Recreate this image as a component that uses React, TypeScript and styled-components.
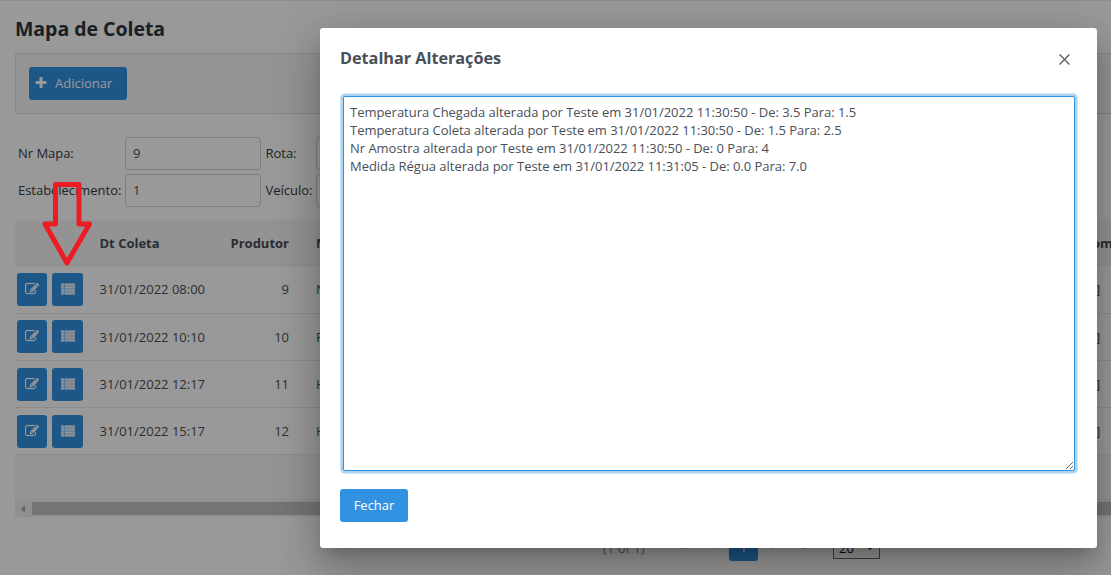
import React from 'react';
import styled, { createGlobalStyle } from 'styled-components';

const Global = createGlobalStyle`
  * { box-sizing: border-box; }
  html, body { margin: 0; padding: 0; background: #fff; overflow: hidden; }
  body { font: 13px/18px "Open Sans", "Noto Sans", sans-serif; color: #484f57; }
`;

const Screen = styled.div`
  position: relative;
  width: 1111px;
  height: 575px;
  overflow: hidden;
`;
const Page = styled.main`
  display: flex;
  flex-direction: column;
  padding: 14px 0 0 15px;
  height: 100%;
  border-top: 1px solid #ededed;
`;
const Title = styled.h1`
  margin: 0;
  height: 38px;
  font-size: 19.5px;
  line-height: 27px;
  font-weight: 700;
  letter-spacing: -0.03px;
  color: #2c343c;
`;
const Toolbar = styled.div`
  display: flex;
  align-items: center;
  flex: none;
  height: 61px;
  padding-left: 13px;
  border: 1px solid #dedede;
  border-right: 0;
  border-radius: 3px 0 0 3px;
  background: #f7f7f7;
`;
const Button = styled.button<{ $width: number }>`
  display: inline-flex;
  align-items: center;
  justify-content: center;
  flex: none;
  width: ${(p) => p.$width}px;
  height: 33px;
  padding: 0 0 2px;
  border: 0;
  border-radius: 3px;
  background: #3192e1;
  color: #fff;
  font: inherit;
`;
const AddButton = styled(Button)`
  justify-content: flex-start;
  padding-left: 5px;
  gap: 7px;
`;
const IconButton = styled(Button)`
  padding: 0 0 1px;
`;
const Filters = styled.div`
  display: grid;
  flex: none;
  grid-template-columns: 107px 136px 55px 136px;
  grid-template-rows: 33px 33px;
  row-gap: 4px;
  padding: 23px 0 0 3px;
  align-items: center;
  color: #333b44;
`;
const FilterLabel = styled.label<{ $indent?: boolean }>`
  padding: 0 0 2px ${(p) => (p.$indent ? 4.5 : 0)}px;
  white-space: nowrap;
  letter-spacing: -0.03px;
`;
const Field = styled.div`
  height: 33px;
  padding: 6px 7px;
  border: 1px solid #ced4da;
  border-radius: 3px;
  color: #484f57;
`;
const Table = styled.section`
  flex: none;
  margin-top: 13px;
`;
const Row = styled.div<{ $tall?: boolean }>`
  display: flex;
  align-items: center;
  height: ${(p) => (p.$tall ? 48 : 47)}px;
  padding-bottom: ${(p) => (p.$tall ? 1 : 0)}px;
  border-bottom: 1px solid #e9e9e9;
`;
const HeadRow = styled(Row)`
  height: 46px;
  background: #f5f5f5;
  font-weight: 700;
  color: #454c54;
`;
const Actions = styled.div<{ $raised?: boolean }>`
  display: flex;
  gap: 5px;
  width: 84px;
  padding-left: 2px;
  padding-bottom: ${(p) => (p.$raised ? 1 : 0)}px;
`;
const DateCell = styled.div`
  width: 115px;
  padding-left: 0.5px;
  white-space: nowrap;
`;
const ProducerCell = styled.div`
  width: 75px;
  text-align: right;
`;
const NameCell = styled.div`
  flex: 1;
  padding-left: 27px;
`;
const EndCell = styled.div<{ $width: number }>`
  width: ${(p) => p.$width}px;
`;
const TableFooter = styled.div`
  height: 45px;
  background: #f7f7f7;
  border-bottom: 1px solid #ededed;
`;
const ScrollTrack = styled.div`
  display: flex;
  align-items: center;
  height: 17px;
  background: #f1f1f1;
`;
const ScrollEnd = styled.div`
  display: flex;
  justify-content: center;
  width: 17px;
  padding-right: 1px;
`;
const ScrollThumb = styled.div`
  flex: 1;
  height: 13px;
  background: #c1c1c1;
`;
const Paginator = styled.footer`
  display: flex;
  align-items: center;
  flex: none;
  height: 27px;
  margin-top: 17px;
  padding-left: 588px;
  color: #777f87;
`;
const PageCount = styled.span`
  width: 63px;
`;
const Chevrons = styled.span`
  display: flex;
  justify-content: space-around;
  width: 63px;
  padding-bottom: 4px;
  font-size: 12px;
  color: #aeb4ba;
`;
const PageNumber = styled(Button)`
  height: 27px;
`;
const PageSize = styled.div`
  display: flex;
  align-items: center;
  justify-content: space-between;
  width: 47px;
  height: 22px;
  margin-left: 12px;
  padding: 0 5px;
  border: 1px solid #707070;
  color: #111;
`;
const Overlay = styled.div`
  position: absolute;
  inset: 0;
  background: rgba(0, 0, 0, 0.4);
`;
const Dialog = styled.div`
  position: absolute;
  left: 320px;
  top: 28px;
  display: flex;
  flex-direction: column;
  align-items: flex-start;
  width: 777px;
  height: 520px;
  padding: 18px 20px 26px;
  border-radius: 3px;
  background: #fff;
  box-shadow: 0 11px 15px -7px rgba(0, 0, 0, 0.2), 0 24px 38px 3px rgba(0, 0, 0, 0.14),
    0 9px 46px 8px rgba(0, 0, 0, 0.12);
`;
const DialogHeader = styled.header`
  display: flex;
  justify-content: space-between;
  width: 100%;
  height: 50px;
  padding-right: 7px;
`;
const DialogTitle = styled.h2`
  margin: 0;
  font-size: 16.25px;
  line-height: 24px;
  font-weight: 700;
  letter-spacing: -0.03px;
`;
const CloseIcon = styled.svg`
  margin-top: 8px;
`;
const Log = styled.textarea`
  width: 732px;
  height: 375px;
  margin: 0 0 0 3px;
  padding: 6px;
  flex: none;
  border: 1px solid #3192e1;
  border-radius: 2px;
  outline: none;
  box-shadow: 0 0 0 2.6px #acd3f3;
  color: #484f57;
  font: inherit;
  letter-spacing: -0.028px;
  resize: both;
`;
const DialogFooter = styled.footer`
  margin-top: 18px;
`;
const Pointer = styled.svg`
  position: absolute;
  left: 40px;
  top: 180px;
`;

const PlusIcon = () => (
  <svg width="14" height="14" viewBox="0 0 1792 1792" fill="currentColor">
    <path d="M1600 736v192q0 40-28 68t-68 28h-416v416q0 40-28 68t-68 28h-192q-40 0-68-28t-28-68v-416h-416q-40 0-68-28t-28-68v-192q0-40 28-68t68-28h416v-416q0-40 28-68t68-28h192q40 0 68 28t28 68v416h416q40 0 68 28t28 68z" />
  </svg>
);
const EditIcon = () => (
  <svg width="14" height="14" viewBox="0 0 1792 1792" fill="currentColor" stroke="currentColor" strokeWidth="30">
    <path d="M888 1184l116-116-152-152-116 116v56h96v96h56zm440-720q-16-16-33 1l-350 350q-17 17-1 33t33-1l350-350q17-17 1-33zm80 594v190q0 119-84.5 203.5t-203.5 84.5h-832q-119 0-203.5-84.5t-84.5-203.5v-832q0-119 84.5-203.5t203.5-84.5h832q63 0 117 25 15 7 18 23 3 17-9 29l-49 49q-14 14-32 8-23-6-45-6h-832q-66 0-113 47t-47 113v832q0 66 47 113t113 47h832q66 0 113-47t47-113v-126q0-13 9-22l64-64q15-15 35-7t20 29zm-96-738l288 288-672 672h-288v-288zm444 132l-92 92-288-288 92-92q28-28 68-28t68 28l152 152q28 28 28 68t-28 68z" />
  </svg>
);
const ListIcon = () => (
  <svg width="14" height="14" viewBox="0 0 14 14" fill="currentColor">
    <path d="M0 1.500h14v11H0z" opacity="0.5" />
    <path d="M0 1.500h3v2H0zM4 1.500h10v2H4zM0 4.500h3v2H0zM4 4.500h10v2H4zM0 7.500h3v2H0zM4 7.500h10v2H4zM0 10.500h3v2H0zM4 10.500h10v2H4z" opacity="0.85" />
  </svg>
);

const rows = [
  { date: '31/01/2022 08:00', producer: 9, name: 'N' },
  { date: '31/01/2022 10:10', producer: 10, name: 'F' },
  { date: '31/01/2022 12:17', producer: 11, name: 'H' },
  { date: '31/01/2022 15:17', producer: 12, name: 'H' },
];

const changes = [
  'Temperatura Chegada alterada por Teste em 31/01/2022 11:30:50 - De: 3.5 Para: 1.5',
  'Temperatura Coleta alterada por Teste em 31/01/2022 11:30:50 - De: 1.5 Para: 2.5',
  'Nr Amostra alterada por Teste em 31/01/2022 11:30:50 - De: 0 Para: 4',
  'Medida Régua alterada por Teste em 31/01/2022 11:31:05 - De: 0.0 Para: 7.0',
].join('\n');

export default function App() {
  return (
    <Screen>
      <Global />
      <Page>
        <Title>Mapa de Coleta</Title>
        <Toolbar>
          <AddButton $width={98}><PlusIcon />Adicionar</AddButton>
        </Toolbar>
        <Filters>
          <FilterLabel>Nr Mapa:</FilterLabel>
          <Field>9</Field>
          <FilterLabel $indent>Rota:</FilterLabel>
          <Field />
          <FilterLabel>Estabelecimento:</FilterLabel>
          <Field>1</Field>
          <FilterLabel $indent>Veículo:</FilterLabel>
          <Field />
        </Filters>
        <Table>
          <HeadRow>
            <Actions />
            <DateCell>Dt Coleta</DateCell>
            <ProducerCell>Produtor</ProducerCell>
            <NameCell>N</NameCell>
            <EndCell $width={19}>om</EndCell>
          </HeadRow>
          {rows.map((row, i) => (
            <Row key={row.date} $tall={i === 0}>
              <Actions $raised={i === 1}>
                <IconButton $width={30}><EditIcon /></IconButton>
                <IconButton $width={31}><ListIcon /></IconButton>
              </Actions>
              <DateCell>{row.date}</DateCell>
              <ProducerCell>{row.producer}</ProducerCell>
              <NameCell>{row.name}</NameCell>
              <EndCell $width={15}>]</EndCell>
            </Row>
          ))}
          <TableFooter />
          <ScrollTrack>
            <ScrollEnd>
              <svg width="4" height="8" viewBox="0 0 4 8"><path d="M4 0v8L0 4z" fill="#a3a3a3" /></svg>
            </ScrollEnd>
            <ScrollThumb />
          </ScrollTrack>
        </Table>
        <Paginator>
          <PageCount>(1 of 1)</PageCount>
          <Chevrons><span>«</span><span>‹</span></Chevrons>
          <PageNumber $width={29}>1</PageNumber>
          <Chevrons><span>›</span><span>»</span></Chevrons>
          <PageSize>
            20
            <svg width="8" height="5" viewBox="0 0 8 5"><path d="M1 1l3 2.500L7 1" fill="#111" stroke="#111" strokeWidth="2" /></svg>
          </PageSize>
        </Paginator>
      </Page>
      <Overlay />
      <Dialog>
        <DialogHeader>
          <DialogTitle>Detalhar Alterações</DialogTitle>
          <CloseIcon width="11" height="11" viewBox="0 0 11 11">
            <path d="M.6.6l9.8 9.8M10.4.6L.6 10.4" stroke="#5c646c" strokeWidth="1.4" />
          </CloseIcon>
        </DialogHeader>
        <Log defaultValue={changes} />
        <DialogFooter>
          <Button $width={68}>Fechar</Button>
        </DialogFooter>
      </Dialog>
      <Pointer width="54" height="90" viewBox="0 0 54 90">
        <path d="M15.5 4.500h23.500v39.500H49.500L27 83 5 44h10.500z" fill="none" stroke="#ed1c24" strokeWidth="5" strokeLinejoin="round" />
      </Pointer>
    </Screen>
  );
}
